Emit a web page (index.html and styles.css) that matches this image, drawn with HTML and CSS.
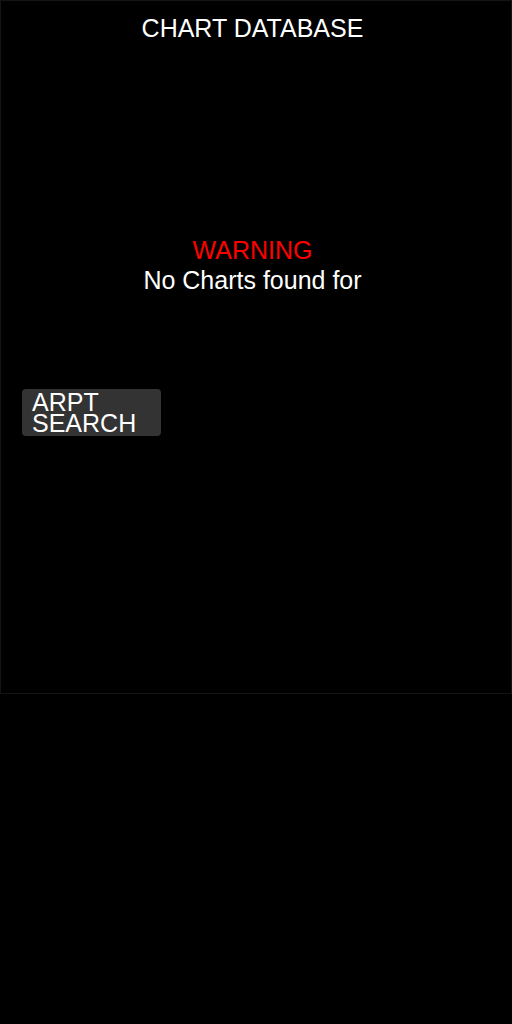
FILE: index.html
```html
<!DOCTYPE html>
<html>
<head>
<meta charset="utf-8">
<link rel="stylesheet" href="styles.css">
</head>
<body>
<div class="panel">
  <div class="title">CHART DATABASE</div>
  <div class="message">
    <div class="warning">WARNING</div>
    <div class="notice">No Charts found for</div>
  </div>
  <div class="actions">
    <button class="btn"><span class="line">ARPT</span><span class="line">SEARCH</span></button>
  </div>
</div>
</body>
</html>
```

FILE: styles.css
```css
html, body {
  margin: 0;
  padding: 0;
  background: #000;
}
body {
  width: 512px;
  height: 1024px;
  font-family: "Liberation Sans", Arial, sans-serif;
  color: #fff;
}
.panel {
  box-sizing: border-box;
  width: 512px;
  height: 694px;
  border: 1px solid #141414;
  background: #000;
  display: flex;
  flex-direction: column;
}
.title {
  font-size: 25px;
  line-height: 28px;
  text-align: center;
  padding-top: 13px;
  padding-right: 7px;
}
.message {
  margin-top: 193px;
  text-align: center;
  font-size: 25px;
  line-height: 30px;
  padding-right: 7px;
}
.warning {
  color: #f00;
}
.actions {
  margin-top: 94px;
  padding-left: 21px;
}
.btn {
  box-sizing: border-box;
  width: 139px;
  height: 47px;
  background: #333;
  border: none;
  border-radius: 4px;
  color: #fff;
  font-family: "Liberation Sans", Arial, sans-serif;
  font-size: 25px;
  line-height: 21px;
  text-align: left;
  padding: 3px 0 0 10px;
  display: flex;
  flex-direction: column;
  align-items: flex-start;
  justify-content: flex-start;
}
.line {
  display: block;
  height: 21px;
}
```
